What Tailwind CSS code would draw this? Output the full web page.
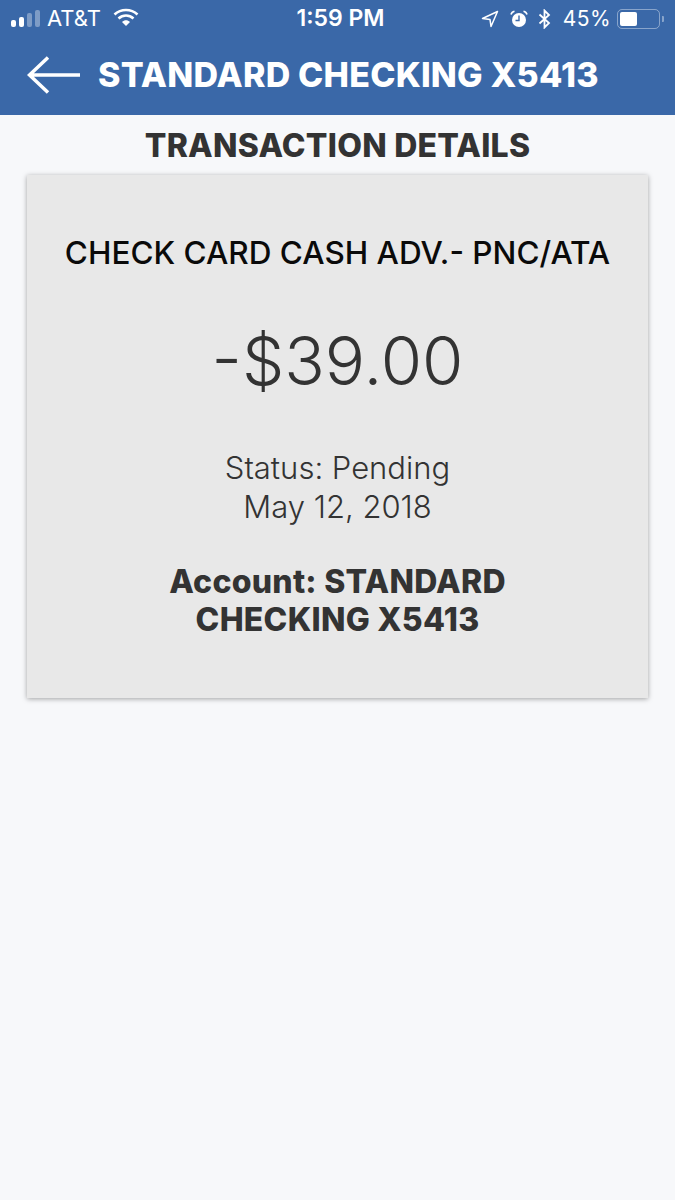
<!DOCTYPE html>
<html lang="en">
<head>
    <meta charset="UTF-8">
    <meta name="viewport" content="width=device-width, initial-scale=1.0">
    <title>Transaction Details</title>
    <script src="https://cdn.jsdelivr.net/npm/@tailwindcss/browser@4"></script>
</head>
<body class="bg-[#f7f8fa] font-['Inter',sans-serif]">
    <div class="w-[675px] h-[1200px] overflow-hidden">
        <!-- blue header with status bar -->
        <header class="bg-[#3a68a8] h-[115px] text-white">
            <div class="h-[37px] flex items-center relative">
                <div class="flex items-end h-[17px] mt-[-1px] pl-[11px] gap-[3px]">
                    <span class="w-[5px] h-[7px] rounded-[2px] bg-white"></span>
                    <span class="w-[5px] h-[10px] rounded-[2px] bg-white"></span>
                    <span class="w-[5px] h-[14px] rounded-[2px] bg-white/35"></span>
                    <span class="w-[5px] h-[17px] rounded-[2px] bg-white/35"></span>
                </div>
                <span class="ml-[7px] text-[22px] leading-none mt-[-1px]">AT&amp;T</span>
                <svg class="ml-[12px] mt-[-2px]" width="26" height="19" viewBox="0 0 26 19" fill="none">
                    <path d="M1.5 6.5C8 .5 18 .5 24.5 6.5" stroke="white" stroke-width="2.6"/>
                    <path d="M5.5 10.5C10 6.5 16 6.5 20.5 10.5" stroke="white" stroke-width="2.6"/>
                    <path d="M9 14C11.5 11.8 14.5 11.8 17 14L13 18Z" fill="white"/>
                </svg>
                <span class="absolute left-0 w-[681px] text-center text-[23px] font-semibold leading-none mt-[-1px]">1:59 PM</span>
                <div class="ml-auto flex items-center pr-[11px]">
                    <svg width="18" height="18" viewBox="0 0 18 18" fill="none">
                        <path d="M16.5 1.5L1.5 8.5L9 9.5L10 16.5Z" stroke="white" stroke-width="1.5" stroke-linejoin="round"/>
                    </svg>
                    <svg class="ml-[11px]" width="18" height="18" viewBox="0 0 18 18" fill="none">
                        <circle cx="9" cy="10" r="7" fill="white"/>
                        <path d="M9 5.5V10.5H5.5" stroke="#3a68a8" stroke-width="1.4"/>
                        <path d="M1 4.5C1.5 2.5 3 1.5 4.5 1.2M17 4.5C16.5 2.5 15 1.5 13.500 1.2" stroke="white" stroke-width="1.6"/>
                    </svg>
                    <svg class="ml-[10px]" width="13" height="20" viewBox="0 0 13 20" fill="none">
                        <path d="M1.500 5.500L11 14L6.500 18.500V1.500L11 6L1.500 14.500" stroke="white" stroke-width="1.800"/>
                    </svg>
                    <span class="ml-[12px] text-[21px] leading-none tracking-[0.4px]">45%</span>
                    <div class="ml-[6px] w-[43px] h-[20px] rounded-[5px] border-[1.5px] border-white/40 p-[2px]">
                        <div class="w-[17px] h-full bg-white rounded-[2px]"></div>
                    </div>
                    <span class="ml-[2px] w-[2px] h-[6px] rounded-r-[1px] bg-white/40"></span>
                </div>
            </div>
            <div class="h-[78px] flex items-center pb-[3px]">
                <svg class="ml-[27px]" width="54" height="38" viewBox="0 0 54 38" fill="none">
                    <path d="M53 19H2M21 1.500L2.500 19L21 36.500" stroke="white" stroke-width="3.500"/>
                </svg>
                <h1 class="ml-[17px] text-[34px] font-extrabold leading-none tracking-[0.2px] whitespace-nowrap">STANDARD CHECKING X5413</h1>
            </div>
        </header>

        <h2 class="h-[60px] pt-[15px] text-center text-[#333333] text-[32px] font-extrabold leading-[32px] tracking-[0.25px]">TRANSACTION DETAILS</h2>

        <!-- details card -->
        <section class="mx-[27px] w-[621px] h-[523px] bg-[#e8e8e8] shadow-[0_1px_5px_rgba(0,0,0,0.35)] text-center">
            <p class="pt-[59px] text-[31.5px] font-medium text-[#0a0a0a] leading-[38px] whitespace-nowrap">CHECK CARD CASH ADV.- PNC/ATA</p>
            <p class="mt-[51px] text-[67px] font-light text-[#333333] leading-[76px]">-$39.00</p>
            <p class="mt-[49px] text-[31px] font-light text-[#333333] leading-[39px]">Status: Pending<br>May 12, 2018</p>
            <p class="mt-[37px] text-[32px] font-extrabold text-[#333333] leading-[38px] tracking-[0.25px]">Account: STANDARD<br>CHECKING X5413</p>
        </section>
    </div>
</body>
</html>
